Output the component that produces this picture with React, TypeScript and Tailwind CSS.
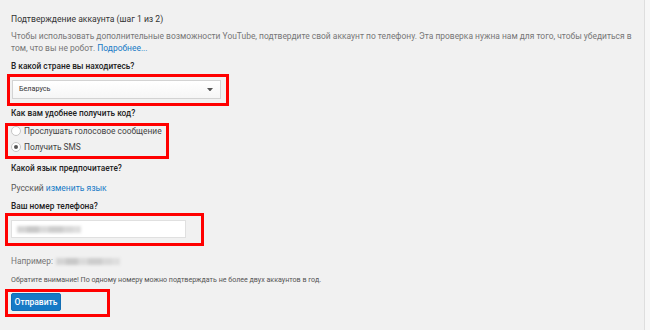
import React from 'react';

const Label: React.FC<{ children: React.ReactNode; className?: string }> = ({ children, className = '' }) => (
  <div className={`text-[8.3px] leading-[12px] font-medium text-[#222] whitespace-nowrap ${className}`}>{children}</div>
);

const Radio: React.FC<{ checked?: boolean; label: string }> = ({ checked, label }) => (
  <div className="flex items-center gap-[3px] h-[10px]">
    <span className="w-[10px] h-[10px] rounded-full border border-[#c6c6c6] bg-white flex items-center justify-center">
      {checked && <span className="w-[4px] h-[4px] rounded-full bg-[#555]" />}
    </span>
    <span className="text-[8.4px] leading-[10px] text-[#444] whitespace-nowrap">{label}</span>
  </div>
);

const Blur: React.FC<{ className?: string }> = ({ className = '' }) => (
  <div className={`flex items-center blur-[1.5px] ${className}`}>
    <span className="w-[10px] h-[7px] bg-[#d4d4d4]" />
    <span className="w-[12px] h-[7px] bg-[#c8c8c8]" />
    <span className="w-[10px] h-[7px] bg-[#dadada]" />
    <span className="w-[14px] h-[7px] bg-[#cdcdcd]" />
    <span className="w-[10px] h-[7px] bg-[#d8d8d8]" />
    <span className="w-[8px] h-[7px] bg-[#dedede]" />
  </div>
);

export default function App() {
  return (
    <div className="w-[650px] h-[330px] bg-[#f7f7f7] flex overflow-hidden font-['Roboto',Arial,sans-serif]">
      <div className="w-[645px] h-full bg-[#f1f1f1] border-r border-[#dedede] pl-[11px] pt-[13px]">
        <div className="text-[8.6px] leading-[12px] text-[#333]">Подтверждение аккаунта (шаг 1 из 2)</div>

        <p className="mt-[5px] text-[8.45px] leading-[12px] text-[#767676] whitespace-nowrap">
          Чтобы использовать дополнительные возможности YouTube, подтвердите свой аккаунт по телефону. Эта проверка нужна нам для того, чтобы убедиться в
          <br />
          том, что вы не робот. <span className="text-[#167ac6]">Подробнее...</span>
        </p>

        <Label className="mt-[6px]">В какой стране вы находитесь?</Label>

        <div className="mt-[2px] -ml-[4px] w-[222px] h-[32px] border-[3px] border-[#ff0000] pl-[2px] pt-[3px]">
          <div className="w-[209px] h-[19px] border border-[#d3d3d3] bg-gradient-to-b from-white to-[#f6f6f6] flex items-center justify-between pl-[6px] pr-[7px]">
            <span className="text-[7.2px] text-[#333]">Беларусь</span>
            <svg width="6" height="3.5" viewBox="0 0 7 4"><path d="M0 0h7L3.5 4z" fill="#555" /></svg>
          </div>
        </div>

        <Label className="mt-[1px]">Как вам удобнее получить код?</Label>

        <div className="mt-[4px] -ml-[6px] w-[164px] h-[36px] border-[3px] border-[#ff0000] pl-[3px] flex flex-col gap-[6px]">
          <Radio label="Прослушать голосовое сообщение" />
          <Radio checked label="Получить SMS" />
        </div>

        <Label className="mt-[3px]">Какой язык предпочитаете?</Label>

        <div className="mt-[8px] text-[8.5px] leading-[12px] text-[#555]">
          Русский <span className="text-[#167ac6]">изменить язык</span>
        </div>

        <Label className="mt-[6px]">Ваш номер телефона?</Label>

        <div className="mt-[1px] -ml-[6px] w-[199px] h-[33px] border-[3px] border-[#ff0000] pl-[3px] pt-[4px]">
          <div className="w-[175px] h-[18px] bg-white border border-[#e0e0e0] flex items-center pl-[5px]">
            <Blur />
          </div>
        </div>

        <div className="mt-[9px] flex items-center h-[12px]">
          <span className="text-[8.3px] leading-[12px] text-[#767676]">Например:</span>
          <Blur className="ml-[3px]" />
        </div>

        <div className="mt-[7px] text-[7.1px] leading-[11px] text-[#555] whitespace-nowrap">
          Обратите внимание! По одному номеру можно подтверждать не более двух аккаунтов в год.
        </div>

        <div className="mt-[4px] -ml-[6px] w-[105px] h-[28px] border-[3px] border-[#ff0000] pl-[3px] pt-[1px]">
          <button className="w-[50px] h-[18px] bg-[#167ac6] border border-[#126db3] rounded-[2px] text-white text-[8.5px] font-medium flex items-center justify-center">
            Отправить
          </button>
        </div>
      </div>
    </div>
  );
}
